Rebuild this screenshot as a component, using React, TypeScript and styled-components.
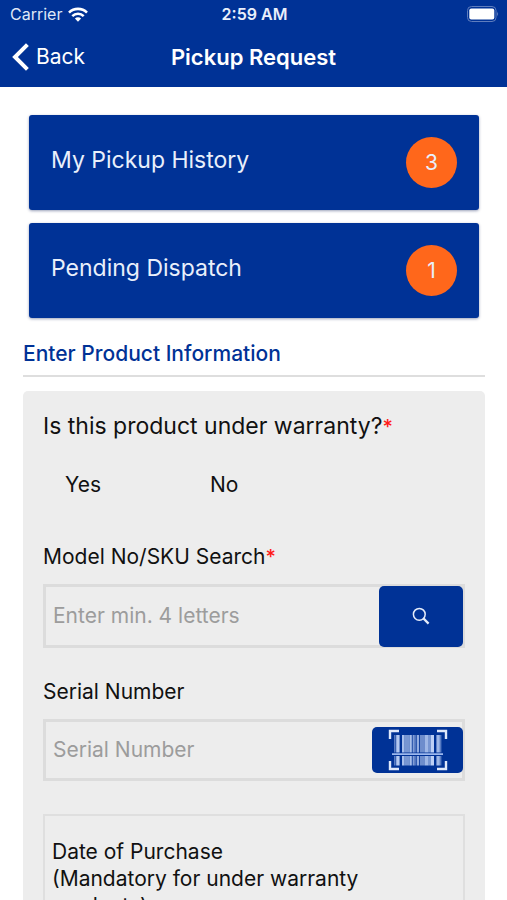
import React from "react";
import styled, { createGlobalStyle } from "styled-components";

const blue = "#003296";
const orange = "#ff671b";

const GlobalStyle = createGlobalStyle`
  * { box-sizing: border-box; }
  body { margin: 0; background: #fff; }
  button, input, select { font: inherit; }
`;

const Screen = styled.div`
  display: flex;
  flex-direction: column;
  height: 100vh;
  overflow: hidden;
  font-family: Inter, "Liberation Sans", sans-serif;
  font-size: 21px;
  color: #111;
  background: #fff;
`;

const Header = styled.header`
  flex: none;
  color: #fff;
  background: ${blue};
`;

const StatusBar = styled.div`
  display: grid;
  grid-template-columns: 1fr auto 1fr;
  align-items: center;
  height: 28px;
  padding: 0 8px 0 10px;
  font-size: 16px;
  line-height: 20px;
`;

const Carrier = styled.span`
  display: flex;
  align-items: center;
  gap: 6px;
  color: #dfe7f7;
`;

const Clock = styled.span`
  font-weight: 600;
  color: #e9effb;
`;

const BatterySlot = styled.span`
  display: flex;
  justify-content: flex-end;
`;

const NavBar = styled.nav`
  display: grid;
  grid-template-columns: 1fr auto 1fr;
  align-items: center;
  height: 59px;
  padding: 0 12px 2px;
`;

const BackButton = styled.button`
  display: flex;
  align-items: center;
  gap: 7px;
  justify-self: start;
  padding: 0;
  border: 0;
  color: #fff;
  background: none;
  cursor: pointer;
`;

const Title = styled.h1`
  margin: 0;
  font-size: 22px;
  font-weight: 600;
  line-height: 28px;
`;

const Content = styled.main`
  flex: 1;
  min-height: 0;
  padding: 28px 22px 24px 23px;
  overflow-y: auto;
  scrollbar-width: none;
`;

const CardList = styled.div`
  display: flex;
  flex-direction: column;
  gap: 13px;
  padding: 0 6px;
`;

const Card = styled.button`
  display: flex;
  align-items: center;
  justify-content: space-between;
  height: 95px;
  padding: 0 22px;
  border: 0;
  border-radius: 3px;
  color: #e9effb;
  background: ${blue};
  box-shadow: 0 1px 3px rgba(0, 20, 80, 0.4);
  text-align: left;
  cursor: pointer;
`;

const CardLabel = styled.span`
  padding-bottom: 5px;
  font-size: 23px;
  line-height: 28px;
`;

const Badge = styled.span`
  display: flex;
  align-items: center;
  justify-content: center;
  width: 51px;
  height: 51px;
  border-radius: 50%;
  background: ${orange};
`;

const SectionTitle = styled.h2`
  margin: 22px 0 14px;
  padding-bottom: 7px;
  border-bottom: 2px solid #dedede;
  color: ${blue};
  font-size: 21px;
  font-weight: 500;
  line-height: 28px;
`;

const Panel = styled.form`
  display: flex;
  flex-direction: column;
  padding: 21px 20px 24px;
  border-radius: 5px;
  background: #ededed;
`;

const Question = styled.fieldset`
  margin: 0 0 44px;
  padding: 0;
  border: 0;
`;

const Legend = styled.legend`
  padding: 0;
  font-size: 23px;
  line-height: 28px;
`;

const Required = styled.span`
  color: #ff1a1a;
  font-size: 20px;
  font-weight: 500;
`;

const Choices = styled.div`
  display: flex;
  gap: 20px;
  padding-top: 30px;
`;

const Choice = styled.label`
  display: flex;
  align-items: center;
  width: 125px;
  line-height: 28px;
  cursor: pointer;
`;

const Radio = styled.input`
  width: 22px;
  height: 22px;
  margin: 0;
  appearance: none;
`;

const Field = styled.div`
  display: flex;
  flex-direction: column;
  gap: 13px;
  margin-bottom: 30px;
`;

const FieldLabel = styled.label`
  line-height: 28px;
`;

const InputFrame = styled.div<{ $tall?: boolean }>`
  display: flex;
  align-items: center;
  height: ${(p) => (p.$tall ? 64 : 62)}px;
  border: 3px solid #dcdcdc;
`;

const TextInput = styled.input`
  flex: 1;
  min-width: 0;
  height: 100%;
  padding: 0 7px 2px;
  border: 0;
  outline: 0;
  color: #111;
  background: none;
  &::placeholder { color: #9c9c9c; opacity: 1; }
`;

const ActionButton = styled.button<{ $wide?: boolean }>`
  flex: none;
  display: flex;
  align-items: center;
  justify-content: center;
  width: ${(p) => (p.$wide ? 91 : 84)}px;
  height: ${(p) => (p.$wide ? 46 : 61)}px;
  margin-right: -1px;
  padding: 0;
  border: 0;
  border-radius: 5px;
  color: #fff;
  background: ${blue};
  cursor: pointer;
`;

const DateBox = styled.button`
  margin-top: 3px;
  padding: 22px 60px 22px 7px;
  border: 2px solid #dfdfdf;
  color: inherit;
  background: none;
  line-height: 27px;
  text-align: left;
  white-space: pre-line;
`;

const WifiIcon = () => (
  <svg width="20" height="15" viewBox="0 0 20 15" fill="none" stroke="#fff" strokeWidth="2.6" aria-hidden="true">
    <path d="M1 5.6a12.8 12.8 0 0 1 18 0" />
    <path d="M4.3 9.1a8.1 8.1 0 0 1 11.4 0" />
    <path d="M10 14.8 6.9 11.6a4.4 4.4 0 0 1 6.2 0Z" fill="#fff" stroke="none" />
  </svg>
);

const BatteryIcon = () => (
  <svg width="32" height="16" viewBox="0 0 32 16" aria-hidden="true">
    <rect x="0.5" y="0.5" width="28.5" height="15" rx="4" fill="none" stroke="#5f7dbd" />
    <rect x="2.3" y="2.5" width="25" height="11" rx="2" fill="#fff" />
    <path d="M30.3 5.5q1.7 2.5 0 5Z" fill="#7f98ca" />
  </svg>
);

const ChevronIcon = () => (
  <svg width="17" height="28" viewBox="0 0 17 28" fill="none" stroke="#fff" strokeWidth="4" aria-hidden="true">
    <path d="M15.4 1.6 3 14l12.4 12.4" />
  </svg>
);

const SearchIcon = () => (
  <svg width="18" height="18" viewBox="0 0 18 18" fill="none" stroke="#e6edfa" aria-hidden="true">
    <circle cx="7.3" cy="7.3" r="5.9" strokeWidth="1.5" />
    <path d="m11.4 11.4 5.2 5.2" strokeWidth="2.2" />
  </svg>
);

const bars = [
  [6, 1.6, 0.45], [8.2, 3.4, 0.9], [14, 2.4, 0.85], [16.4, 5.4, 0.6], [21.8, 2, 0.85],
  [24.6, 2, 0.65], [26.6, 2, 0.4], [29, 2, 0.75], [31.8, 4.8, 0.55], [36.6, 4, 0.8],
  [40.6, 2, 0.6], [42.6, 3.4, 0.95], [48.4, 3.4, 0.8], [51.8, 1.6, 0.45],
];

const BarcodeIcon = () => (
  <svg width="60" height="42" viewBox="0 0 60 42" aria-hidden="true">
    <path d="M2 10V2h9M49 2h9v8M58 32v8h-9M11 40H2v-8" fill="none" stroke="#dfe8fa" strokeWidth="2.4" />
    <g fill="#c6d8fa">
      {bars.map(([x, w, o]) => (
        <path key={x} d={`M${x} 6h${w}v17.5h-${w}zM${x} 27h${w}v9.5h-${w}z`} opacity={o} />
      ))}
    </g>
    <path d="M4 25.2h51" stroke="#9db9ee" strokeWidth="1.8" />
  </svg>
);

export default function App() {
  return (
    <Screen>
      <GlobalStyle />
      <Header>
        <StatusBar>
          <Carrier>Carrier <WifiIcon /></Carrier>
          <Clock>2:59 AM</Clock>
          <BatterySlot><BatteryIcon /></BatterySlot>
        </StatusBar>
        <NavBar>
          <BackButton type="button"><ChevronIcon />Back</BackButton>
          <Title>Pickup Request</Title>
        </NavBar>
      </Header>
      <Content>
        <CardList>
          <Card type="button"><CardLabel>My Pickup History</CardLabel><Badge>3</Badge></Card>
          <Card type="button"><CardLabel>Pending Dispatch</CardLabel><Badge>1</Badge></Card>
        </CardList>
        <SectionTitle>Enter Product Information</SectionTitle>
        <Panel onSubmit={(e) => e.preventDefault()}>
          <Question>
            <Legend>Is this product under warranty?<Required>*</Required></Legend>
            <Choices>
              <Choice><Radio type="radio" name="warranty" value="yes" />Yes</Choice>
              <Choice><Radio type="radio" name="warranty" value="no" />No</Choice>
            </Choices>
          </Question>
          <Field>
            <FieldLabel htmlFor="model">Model No/SKU Search<Required>*</Required></FieldLabel>
            <InputFrame $tall>
              <TextInput id="model" placeholder="Enter min. 4 letters" />
              <ActionButton type="submit" aria-label="Search"><SearchIcon /></ActionButton>
            </InputFrame>
          </Field>
          <Field>
            <FieldLabel htmlFor="serial">Serial Number</FieldLabel>
            <InputFrame>
              <TextInput id="serial" placeholder="Serial Number" />
              <ActionButton $wide type="button" aria-label="Scan barcode"><BarcodeIcon /></ActionButton>
            </InputFrame>
          </Field>
          <DateBox type="button">{"Date of Purchase\n(Mandatory for under warranty products)"}</DateBox>
        </Panel>
      </Content>
    </Screen>
  );
}
